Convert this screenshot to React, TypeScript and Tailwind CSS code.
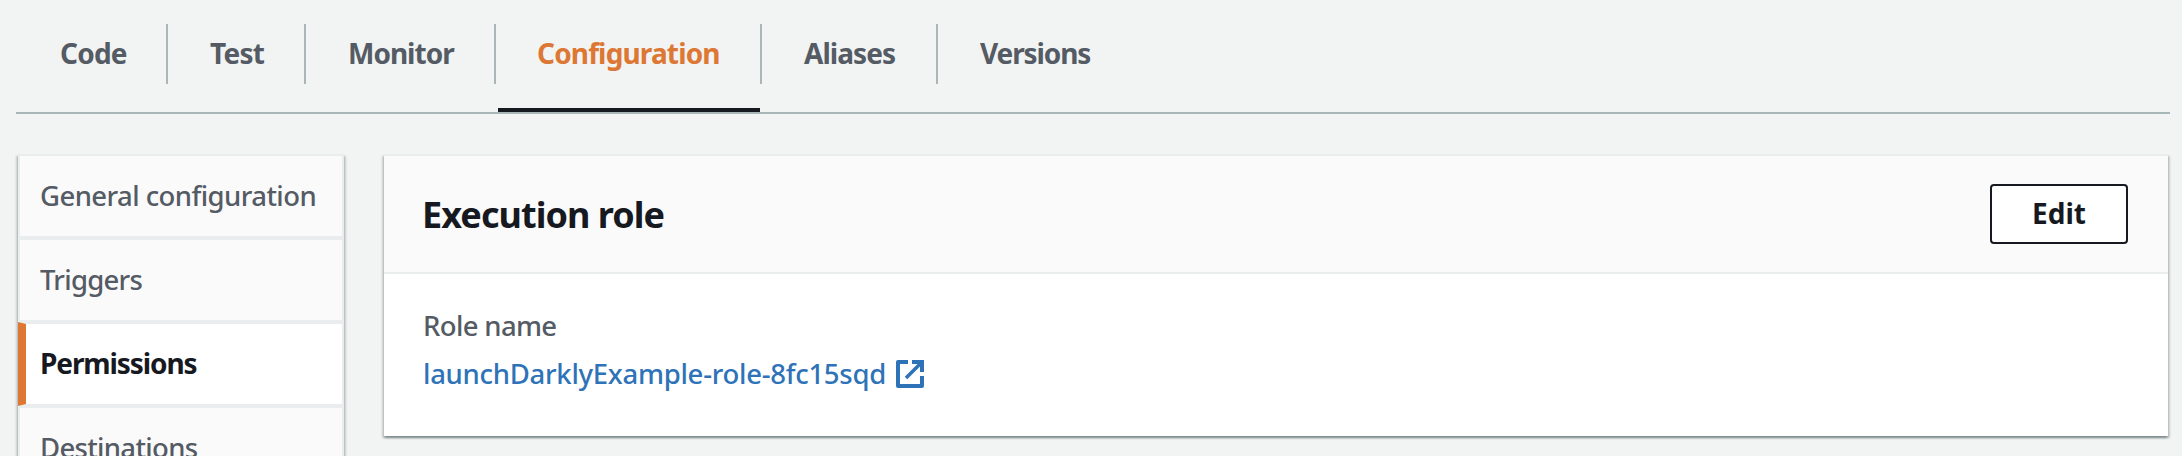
const tabs = [
  { label: "Code", cell: "w-[152px] pl-[44px] tracking-[-0.8px]" },
  { label: "Test", cell: "w-[138px] pl-[42px] tracking-[-0.7px]" },
  { label: "Monitor", cell: "w-[190px] pl-[42px] tracking-[-1px]" },
  { label: "Configuration", cell: "w-[266px] pl-[41px] tracking-[-0.85px]", active: true },
  { label: "Aliases", cell: "w-[176px] pl-[42px] tracking-[-0.95px]" },
  { label: "Versions", cell: "pl-[42px] tracking-[-1.1px]" },
];

const navItems = [
  { label: "General configuration", tracking: "tracking-[-0.57px]" },
  { label: "Triggers", tracking: "tracking-[-0.75px]" },
  { label: "Permissions", tracking: "tracking-[-1.1px]", active: true },
  { label: "Destinations", tracking: "tracking-[-0.68px]" },
];

const cardShadow =
  "shadow-[0_2px_2px_0_rgba(0,28,36,0.3),2px_2px_2px_0_rgba(0,28,36,0.15),-2px_2px_2px_0_rgba(0,28,36,0.15)]";

function ExternalIcon() {
  return (
    <svg className="block h-7 w-7" viewBox="0 0 28 28" fill="none" stroke="#2e73b8" strokeWidth="4">
      <path d="M12 2H2v24h24V16" strokeLinejoin="round" />
      <path d="M16 2h10v10" />
      <path d="M25.5 2.5 10 18" strokeWidth="3.6" />
    </svg>
  );
}

function Tabs() {
  return (
    <nav className="flex h-[114px] border-b-2 border-[#aab7b8] text-[28px] leading-[60px] font-bold text-[#545b64]">
      {tabs.map((tab, i) => (
        <div
          key={tab.label}
          className={`relative mt-6 h-[60px] shrink-0 whitespace-nowrap ${tab.cell} ${
            i < tabs.length - 1 ? "border-r-2 border-[#aab7b8]" : ""
          } ${tab.active ? "text-[#dd7734]" : ""}`}
        >
          <span className="relative -top-px">{tab.label}</span>
          {tab.active && <div className="absolute top-[84px] right-0 left-[2px] h-1 bg-[#16191f]" />}
        </div>
      ))}
    </nav>
  );
}

function SideNav() {
  return (
    <ul className={`ml-[2px] w-[326px] shrink-0 ${cardShadow}`}>
      {navItems.map((item) => (
        <li
          key={item.label}
          className={`h-[84px] border-2 border-[#eaeded] whitespace-nowrap ${item.tracking} ${
            item.active
              ? "border-l-8 border-l-[#dd7734] bg-white pl-[14px] text-[28px] leading-[78px] font-bold text-[#16191f]"
              : "bg-[#fafafa] pl-[20px] text-[27.5px] leading-[79px] font-medium text-[#545b64]"
          }`}
        >
          {item.label}
        </li>
      ))}
    </ul>
  );
}

function ExecutionRole() {
  return (
    <section className={`ml-10 h-[282px] w-[1784px] shrink-0 border-t-2 border-[#eaeded] bg-white ${cardShadow}`}>
      <header className="flex h-[118px] items-center justify-between border-b-2 border-[#eaeded] bg-[#fafafa] pr-10 pl-[38px]">
        <h2 className="pt-px text-[36px] leading-[44px] font-bold tracking-[-0.95px] text-[#16191f]">Execution role</h2>
        <button className="h-[60px] w-[138px] rounded-[4px] border-2 border-[#16191f] bg-white pb-[2px] text-[28px] leading-[54px] font-bold text-[#16191f]">
          Edit
        </button>
      </header>
      <div className="pt-[28px] pl-[39px] text-[27.5px] leading-[48px] font-medium whitespace-nowrap">
        <div className="tracking-[-0.65px] text-[#545b64]">Role name</div>
        <a className="flex items-center text-[#2e73b8]">
          <span className="w-[473px] tracking-[-0.28px]">launchDarklyExample-role-8fc15sqd</span>
          <ExternalIcon />
        </a>
      </div>
    </section>
  );
}

export default function App() {
  return (
    <div className="h-[456px] w-[2182px] overflow-hidden bg-[#f2f3f3] px-4 font-['Noto_Sans',sans-serif]">
      <div className="w-[2154px]">
        <Tabs />
        <div className="flex items-start pt-10">
          <SideNav />
          <ExecutionRole />
        </div>
      </div>
    </div>
  );
}
